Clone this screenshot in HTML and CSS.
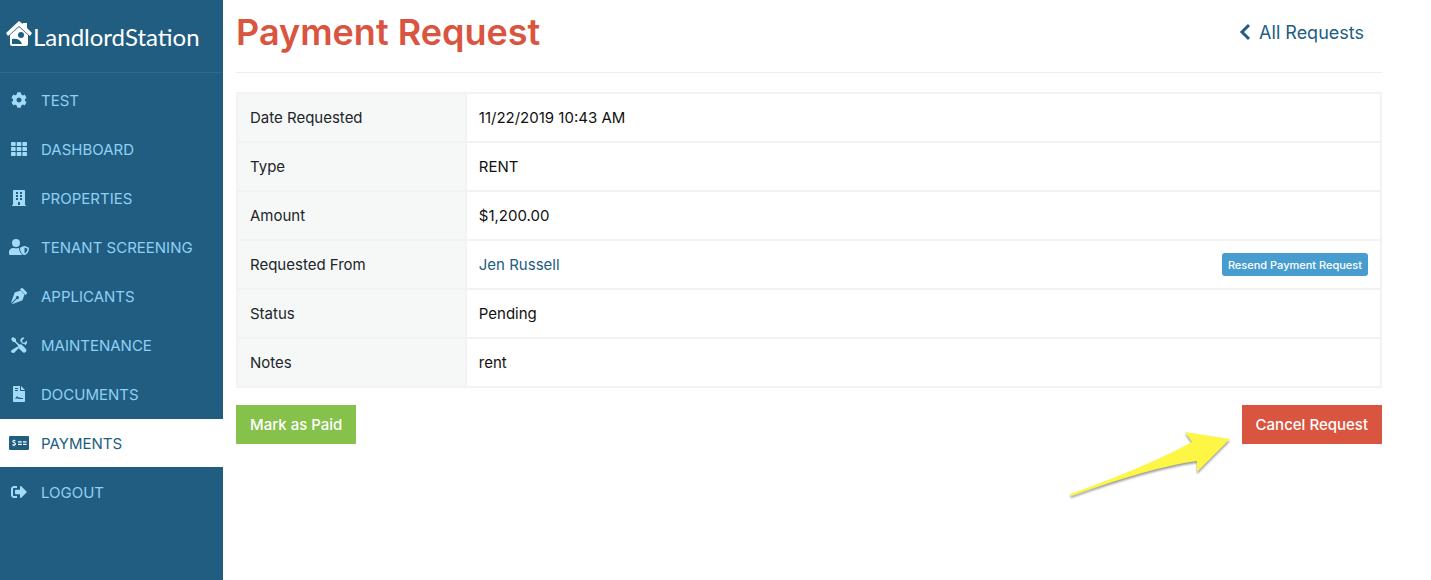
FILE: index.html
```html
<!DOCTYPE html>
<html lang="en">
  <head>
    <meta charset="UTF-8" />
    <meta name="viewport" content="width=device-width, initial-scale=1" />
    <title>Payment Request</title>
    <link rel="stylesheet" href="styles.css">
  </head>

  <body>
    <aside class="sidebar">
      <a class="logo" href="#">
        <svg class="logo-house" viewBox="0 0 26 26" aria-hidden="true">
          <path d="M13 0l4 3V2h4v5l5 5-2 3L13 5 2 15l-2-3z" fill="#fff" />
          <path d="M13 6l9 8v9q0 2-2 2H6q-2 0-2-2v-9z" fill="#fff" />
          <path d="M6 18q8-1 10 5H6z" fill="#215d81" />
          <circle cx="15" cy="14" r="3" fill="#215d81" />
        </svg>
        <span>LandlordStation</span>
      </a>

      <nav>
        <ul class="menu">
          <li>
            <a href="#">
              <svg class="icon" viewBox="0 0 512 512" aria-hidden="true">
                <path d="M487.4 315.7l-42.6-24.6c4.3-23.2 4.3-47 0-70.2l42.6-24.6c4.9-2.8 7.1-8.6 5.5-14-11.1-35.6-30-67.8-54.7-94.6-3.8-4.1-10-5.1-14.8-2.3L380.8 110c-17.9-15.4-38.5-27.3-60.8-35.1V25.8c0-5.6-3.9-10.5-9.4-11.7-36.7-8.2-74.3-7.8-109.2 0-5.5 1.2-9.4 6.1-9.4 11.7V75c-22.2 7.9-42.8 19.8-60.8 35.1L88.7 85.5c-4.9-2.8-11-1.9-14.8 2.3-24.7 26.7-43.6 58.9-54.7 94.6-1.7 5.4.6 11.2 5.5 14L67.3 221c-4.3 23.2-4.3 47 0 70.2l-42.6 24.6c-4.9 2.8-7.1 8.6-5.5 14 11.1 35.6 30 67.8 54.7 94.6 3.8 4.1 10 5.1 14.8 2.3l42.6-24.6c17.9 15.4 38.5 27.3 60.8 35.1v49.2c0 5.6 3.9 10.5 9.4 11.7 36.7 8.2 74.3 7.8 109.2 0 5.5-1.2 9.4-6.1 9.4-11.7v-49.2c22.2-7.9 42.8-19.8 60.8-35.1l42.6 24.6c4.9 2.8 11 1.9 14.8-2.3 24.7-26.7 43.6-58.9 54.7-94.6 1.5-5.5-.7-11.3-5.6-14.1zM256 336c-44.1 0-80-35.9-80-80s35.9-80 80-80 80 35.9 80 80-35.9 80-80 80z" />
              </svg>
              TEST
            </a>
          </li>
          <li>
            <a href="#">
              <svg class="icon" viewBox="0 0 512 512" aria-hidden="true">
                <path d="M24 32h101q24 0 24 24v80q0 24-24 24H24q-24 0-24-24V56q0-24 24-24zM206 32h101q24 0 24 24v80q0 24-24 24H206q-24 0-24-24V56q0-24 24-24zM387 32h101q24 0 24 24v80q0 24-24 24H387q-24 0-24-24V56q0-24 24-24zM24 192h101q24 0 24 24v80q0 24-24 24H24q-24 0-24-24v-80q0-24 24-24zM206 192h101q24 0 24 24v80q0 24-24 24H206q-24 0-24-24v-80q0-24 24-24zM387 192h101q24 0 24 24v80q0 24-24 24H387q-24 0-24-24v-80q0-24 24-24zM24 352h101q24 0 24 24v80q0 24-24 24H24q-24 0-24-24v-80q0-24 24-24zM206 352h101q24 0 24 24v80q0 24-24 24H206q-24 0-24-24v-80q0-24 24-24zM387 352h101q24 0 24 24v80q0 24-24 24H387q-24 0-24-24v-80q0-24 24-24z" />
              </svg>
              DASHBOARD
            </a>
          </li>
          <li>
            <a href="#">
              <svg class="icon" viewBox="0 0 448 512" aria-hidden="true">
                <path fill-rule="evenodd" d="M436 480h-20V24q0-24-24-24H56Q32 0 32 24v456H12q-12 0-12 12v20h448v-20q0-12-12-12zM128 64h64v64h-64zM256 64h64v64h-64zM128 160h64v64h-64zM256 160h64v64h-64zM128 256h64v64h-64zM256 256h64v64h-64zM192 384h64v96h-64z" />
              </svg>
              PROPERTIES
            </a>
          </li>
          <li>
            <a href="#">
              <svg class="icon" viewBox="0 0 640 512" aria-hidden="true">
                <circle cx="224" cy="128" r="128" />
                <path d="M320 289c-6 0-12-1-18-1h-16c-38 18-86 18-125 0h-27C60 288 0 348 0 422v42c0 27 22 48 48 48h352c10 0 19-3 27-8-60-45-101-118-107-215z" />
                <path fill-rule="evenodd" d="M622 271l-116-45c-8-3-16-3-24 0l-116 45c-9 4-14 12-14 21 0 118 72 192 130 218 8 3 16 3 24 0 46-20 134-86 134-218 0-9-7-17-18-21zM496 462V273l96 37c-4 84-56 132-96 152z" />
              </svg>
              TENANT SCREENING
            </a>
          </li>
          <li>
            <a href="#">
              <svg class="icon" viewBox="0 0 512 512" aria-hidden="true">
                <path d="M136 139c-12 4-21 13-25 25L0 460l15 15 148-148a48 48 0 1 1 22 22L37 497l15 15 296-111c12-4 21-13 25-25l59-172-124-124z" />
                <path d="M498 125L387 14c-19-19-49-19-67 0l-33 32 179 179 32-33c19-18 19-48 0-67z" />
              </svg>
              APPLICANTS
            </a>
          </li>
          <li>
            <a href="#">
              <svg class="icon" viewBox="0 0 512 512" aria-hidden="true">
                <path d="M64 0L0 64l64 96h53l108 108c-10 33-3 67 20 90l117 117c35 37 77 37 106 7 33-30 33-75 4-106L355 259c-25-24-59-30-90-19L160 132V64z" />
                <path d="M508 112l-75 75-68-11-11-68 75-75C363-9 295 50 299 119l2 28 73 73c34-2 64 9 87 32l8 8c40-38 51-93 39-148z" />
                <path d="M207 302L38 404c-50 30-50 70-13 95 34 23 67 13 87-7l132-133c-16-17-27-35-37-57z" />
              </svg>
              MAINTENANCE
            </a>
          </li>
          <li>
            <a href="#">
              <svg class="icon" viewBox="0 0 384 512" aria-hidden="true">
                <path d="M256 0v128h128z" />
                <path fill-rule="evenodd" d="M224 136V0H24Q0 0 0 24v464q0 24 24 24h336q24 0 24-24V160H248q-24 0-24-24zM64 64h96v28H64zM64 128h96v28H64zM64 408l52-70q22-20 36 8l26 33 42-17 24 20h76v36H228l-20-10-46 8-28-24-30 16H64z" />
              </svg>
              DOCUMENTS
            </a>
          </li>
          <li>
            <a href="#" class="active" aria-current="page">
              <svg class="icon" viewBox="0 0 640 512" aria-hidden="true">
                <rect y="32" width="640" height="448" rx="32" />
                <path class="icon-line" d="M206 190c-60-36-98 4-74 32 18 20 74 30 74 64 0 40-54 48-92 18M160 148v42M160 314v42M288 220h120M448 220h112M288 300h120M448 300h112" />
              </svg>
              PAYMENTS
            </a>
          </li>
          <li>
            <a href="#">
              <svg class="icon" viewBox="0 0 512 512" aria-hidden="true">
                <path d="M497 273L329 441c-15 15-41 4.5-41-17v-96H152c-13.3 0-24-10.7-24-24v-96c0-13.3 10.7-24 24-24h136V88c0-21.4 25.9-32 41-17l168 168c9.3 9.4 9.3 24.6 0 34zM192 436v-40c0-6.6-5.4-12-12-12H96c-17.7 0-32-14.3-32-32V160c0-17.7 14.3-32 32-32h84c6.6 0 12-5.4 12-12V76c0-6.6-5.4-12-12-12H96c-53 0-96 43-96 96v192c0 53 43 96 96 96h84c6.6 0 12-5.4 12-12z" />
              </svg>
              LOGOUT
            </a>
          </li>
        </ul>
      </nav>
    </aside>

    <main class="content">
      <header class="page-header">
        <h1>Payment Request</h1>
        <a class="back" href="#">
          <svg class="chevron" viewBox="0 0 12 18" aria-hidden="true">
            <path d="M10 2L3 9l7 7" />
          </svg>
          All Requests
        </a>
      </header>

      <table class="details">
        <tr>
          <th scope="row">Date Requested</th>
          <td>11/22/2019 10:43 AM</td>
        </tr>
        <tr>
          <th scope="row">Type</th>
          <td>RENT</td>
        </tr>
        <tr>
          <th scope="row">Amount</th>
          <td>$1,200.00</td>
        </tr>
        <tr>
          <th scope="row">Requested From</th>
          <td>
            <div class="tenant">
              <a href="#">Jen Russell</a>
              <button type="button" class="resend">Resend Payment Request</button>
            </div>
          </td>
        </tr>
        <tr>
          <th scope="row">Status</th>
          <td>Pending</td>
        </tr>
        <tr>
          <th scope="row">Notes</th>
          <td>rent</td>
        </tr>
      </table>

      <div class="actions">
        <button type="button" class="btn btn-paid">Mark as Paid</button>
        <div class="cancel">
          <button type="button" class="btn btn-cancel">Cancel Request</button>
          <svg class="arrow" viewBox="0 0 176 76" aria-hidden="true">
            <path d="M8 67Q82 41 130 15L123 5l45 7-33 33v-11Q90 40 9 69z" />
          </svg>
        </div>
      </div>
    </main>
  </body>
</html>
```
FILE: styles.css
```css
* {
  box-sizing: border-box;
}

body {
  margin: 0;
  min-height: 100vh;
  display: flex;
  font-family: Inter, "Liberation Sans", sans-serif;
  font-size: 15px;
  line-height: 23px;
  color: #212529;
  background: #fff;
}

a {
  color: #215d81;
  text-decoration: none;
}

.sidebar {
  flex: 0 0 223px;
  background: #215d81;
}

.logo {
  display: flex;
  align-items: center;
  height: 73px;
  padding: 0 6px;
  gap: 1px;
  border-bottom: 1px solid #2c6a90;
  color: #fff;
  font-family: Lato, sans-serif;
  font-weight: 400;
  font-size: 24px;
}

.logo-house {
  width: 26px;
  height: 26px;
  margin-bottom: 4px;
}

.menu {
  list-style: none;
  margin: 0;
  padding: 3px 0 0;
}

.menu a {
  display: flex;
  align-items: center;
  gap: 12px;
  height: 48px;
  margin-bottom: 1px;
  padding-left: 9px;
  color: #8fd0f5;
}

.menu a.active {
  background: #fff;
  color: #215d81;
}

.icon {
  width: 20px;
  height: 16px;
  fill: #a3daf8;
}

.active .icon {
  fill: #215d81;
}

.icon-line {
  fill: none;
  stroke: #fff;
  stroke-width: 36px;
}

.content {
  flex: 1;
  min-width: 0;
  padding: 0 49px 0 13px;
}

.page-header {
  display: flex;
  align-items: center;
  justify-content: space-between;
  height: 73px;
  padding: 0 18px 8px 0;
  border-bottom: 1px solid #eee;
}

h1 {
  margin: 0;
  color: #d95540;
  font-size: 36px;
  line-height: 48px;
  font-weight: 600;
}

.back {
  display: flex;
  align-items: center;
  gap: 8px;
  font-size: 18px;
}

.chevron {
  width: 12px;
  height: 18px;
  fill: none;
  stroke: #215d81;
  stroke-width: 3px;
}

.details {
  width: 100%;
  margin-top: 19px;
  border-collapse: collapse;
  border: 2px solid #f1f2f2;
}

.details th,
.details td {
  padding: 12px;
  border: 2px solid #f1f2f2;
  text-align: left;
  font-weight: 400;
}

.details th {
  width: 20%;
  background: #f6f8f8;
}

.details td {
  color: #111;
}

.tenant {
  display: flex;
  align-items: center;
  justify-content: space-between;
}

.resend {
  height: 23px;
  padding: 0 6px;
  border: 0;
  border-radius: 3px;
  background: #479dd0;
  color: #fff;
  font: 500 11px Inter, sans-serif;
}

.actions {
  display: flex;
  justify-content: space-between;
  margin-top: 17px;
}

.btn {
  height: 39px;
  padding: 0 14px;
  border: 0;
  color: #fff;
  font: 500 15px Inter, sans-serif;
}

.btn-paid {
  background: #85c14b;
}

.btn-cancel {
  background: #d95540;
}

.cancel {
  position: relative;
}

/* callout pointing at the cancel button */
.arrow {
  position: absolute;
  top: 22px;
  right: calc(100% + 4px);
  width: 176px;
  height: 76px;
  fill: #fdf645;
  filter: drop-shadow(0 2px 1px rgba(0, 0, 0, 0.4));
}
```
